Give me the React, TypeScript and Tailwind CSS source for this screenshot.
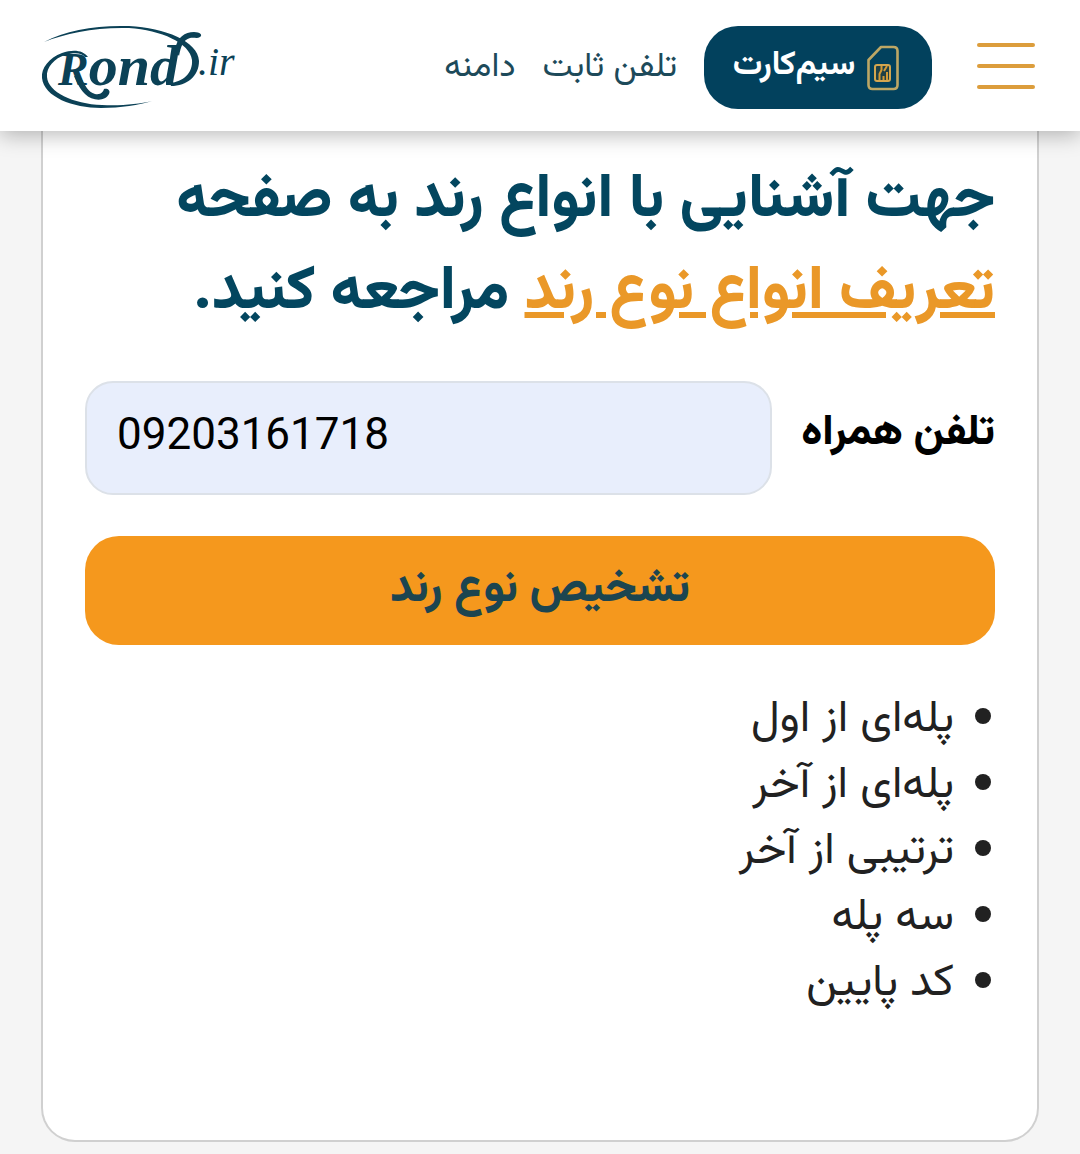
const results = [
  "پله‌ای از اول",
  "پله‌ای از آخر",
  "ترتیبی از آخر",
  "سه پله",
  "کد پایین",
];

function Logo() {
  return (
    <svg viewBox="0 0 196 84" className="h-[84px] w-[196px]" role="img" aria-label="Rond.ir">
      <g fill="#0b4156" fontFamily="'Liberation Serif', serif" fontStyle="italic" direction="ltr">
        <text x="17" y="61" fontSize="58" fontWeight="700">
          <tspan fontSize="46">R</tspan>ond
        </text>
        <text x="157" y="51" fontSize="40">.ir</text>
      </g>
      <g fill="#0b4156">
        <path d="M3 18 C25 6 55 1 88 2 C124 4 157 17 158 37 C158 52 146 62 130 62 L129 59 C142 58 152 49 151 36 C149 19 120 6 88 4 C55 3 25 9 3 18Z" />
        <path d="M47 33 C42 26 32 25 21 29 C8 34 0 44 1 54 C3 73 32 84 60 84 C80 84 98 81 111 77 C98 80 80 82 61 81 C32 80 7 68 6 53 C5 43 14 34 24 31 C34 28 41 29 44 33Z" />
        <path d="M134 26 C136 13 144 8 153 8 C159 8 162 11 159 13 C156 15 153 13 149 14 C142 16 140 22 138 32Z" />
        <path d="M40 54 C44 61 47 68 54 70 C60 71 62 68 63 65 C66 64 70 66 68 70 C64 78 51 77 44 70 C38 64 36 58 33 52Z" />
      </g>
    </svg>
  );
}

function SimIcon() {
  return (
    <svg viewBox="0 0 32 46" className="h-[46px] w-8" fill="none" strokeLinejoin="round" aria-hidden="true">
      <path d="M14 2H26.5Q30.5 2 30.5 6V40Q30.5 44 26.5 44H5.5Q1.5 44 1.5 40V15Z" stroke="#bda765" strokeWidth="2.6" />
      <rect x="8" y="20" width="15" height="16" rx="2" fill="#1f4046" stroke="#d3a650" strokeWidth="2" />
      <path d="M12.500 35V29L14.500 25V21M16.500 35V31M17 26L20 21M20 35V27" stroke="#d39a35" strokeWidth="2" />
    </svg>
  );
}

export default function App() {
  return (
    <div dir="rtl" className="min-h-screen bg-[#f5f5f5] pb-3 font-['Vazirmatn','Noto_Sans',sans-serif]">
      <header className="sticky top-0 z-10 flex h-[131px] items-center bg-white pt-1 pr-[45px] pl-[41px] shadow-[0_4px_20px_rgba(0,0,0,0.28)]">
        <button type="button" aria-label="منو" className="flex w-[58px] flex-col gap-[17px] pb-1">
          <span className="h-1 rounded-full bg-[#dc9d3c]" />
          <span className="h-1 rounded-full bg-[#dc9d3c]" />
          <span className="h-1 rounded-full bg-[#dc9d3c]" />
        </button>
        <nav className="mr-[45px] flex items-center gap-[27px] text-[34px] leading-[48px] text-[#1d4a5a]">
          <a href="#sim" className="flex h-[83px] w-[228px] items-center justify-center gap-3 rounded-[34px] bg-[#02415d] pr-1 text-[33px] font-bold text-white">
            <SimIcon />
            <span className="pb-1">سیم‌کارت</span>
          </a>
          <a href="#phone">تلفن ثابت</a>
          <a href="#domain">دامنه</a>
        </nav>
        <a href="#home" className="mr-auto pb-1">
          <Logo />
        </a>
      </header>

      <main className="mx-[41px] rounded-b-[34px] border-2 border-t-0 border-[#d0d0d0] bg-white px-[42px] pt-6 pb-[123px]">
        <h1 className="text-[61px] leading-[92px] font-extrabold text-[#03465f]">
          جهت آشنایی با انواع رند به صفحه{" "}
          <a href="#types" className="text-[#ea9828] underline">تعریف انواع نوع رند</a>{" "}
          مراجعه کنید.
        </h1>
        <form className="mt-[42px]" onSubmit={(e) => e.preventDefault()}>
          <div className="flex items-start gap-[29px]">
            <label htmlFor="mobile" className="pt-5 text-[43px] leading-[66px] font-extrabold whitespace-nowrap text-black">تلفن همراه</label>
            <input
              id="mobile"
              type="tel"
              dir="ltr"
              defaultValue="09203161718"
              className="h-[114px] min-w-0 flex-1 rounded-[28px] border-2 border-[#dce1e8] bg-[#e8eefc] px-[30px] pb-2 text-left font-['Roboto',sans-serif] text-[44px] text-black"
            />
          </div>
          <button type="submit" className="mt-[41px] h-[109px] w-full rounded-[34px] bg-[#f5981d] text-[46px] font-extrabold text-[#1c4550]">تشخیص نوع رند</button>
        </form>
        <ul className="mt-[42px] text-[45px] leading-[66px] text-[#212121]">
          {results.map((r) => (
            <li key={r} className="flex items-center gap-[21px] pr-1">
              <span className="mb-2 size-4 rounded-full bg-[#212121]" />
              {r}
            </li>
          ))}
        </ul>
      </main>
    </div>
  );
}
